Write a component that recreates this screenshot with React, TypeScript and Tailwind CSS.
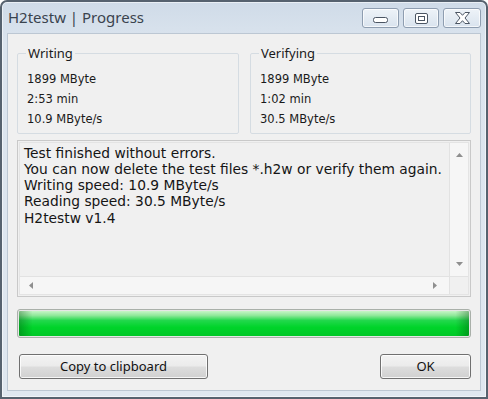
import type { ReactNode } from "react";

const groupFont = "font-['DejaVu_Sans',sans-serif] text-[11.5px] text-[#1a1a1a]";
const uiFont = "font-['Noto_Sans',sans-serif]";

function CaptionButton({ w, children }: { w: string; children: ReactNode }) {
	return (
		<div
			className={`${w} h-[20px] flex items-center justify-center rounded-[3px] border border-[#8e9db0] bg-[linear-gradient(to_bottom,#eef3f8,#d9e3ee)] shadow-[inset_0_0_0_1px_rgba(255,255,255,0.7)]`}
		>
			{children}
		</div>
	);
}

function Group({ title, lines, w }: { title: string; lines: string[]; w: string }) {
	return (
		<fieldset className={`${w} border border-[#d5dce2] rounded-[2px] pl-[9px] pb-[4px]`}>
			<legend className={`${uiFont} ml-[-1px] px-[2px] text-[13px] leading-[15px] text-[#1a1a1a]`}>
				{title}
			</legend>
			<div className={`${groupFont} pt-[8px]`}>
				{lines.map((l) => (
					<div key={l} className="h-[20px] leading-[20px]">
						{l}
					</div>
				))}
			</div>
		</fieldset>
	);
}

function Arrow({ dir }: { dir: "up" | "down" | "left" | "right" }) {
	const pts = {
		up: "0,4 3.5,0 7,4",
		down: "0,0 3.5,4 7,0",
		left: "4,0 0,3.5 4,7",
		right: "0,0 4,3.5 0,7",
	}[dir];
	const vert = dir === "up" || dir === "down";
	return (
		<svg width={vert ? 7 : 4} height={vert ? 4 : 7} viewBox={vert ? "0 0 7 4" : "0 0 4 7"}>
			<polygon points={pts} fill="#8f8f8f" />
		</svg>
	);
}

function WinButton({ label, w }: { label: string; w: string }) {
	return (
		<button
			className={`${w} h-[25px] rounded-[3px] border border-[#707070] bg-[linear-gradient(to_bottom,#f3f3f3_0%,#ebebeb_48%,#dddddd_52%,#d0d0d0_100%)] shadow-[inset_0_0_0_1px_rgba(255,255,255,0.8)] ${uiFont} text-[13px] text-[#111] pt-[1px]`}
		>
			{label}
		</button>
	);
}

export default function App() {
	const log = [
		"Test finished without errors.",
		"You can now delete the test files *.h2w or verify them again.",
		"Writing speed: 10.9 MByte/s",
		"Reading speed: 30.5 MByte/s",
		"H2testw v1.4",
	];

	return (
		<div className="w-[488px] h-[399px] flex flex-col rounded-t-[7px] border-2 border-[#56626f] bg-[linear-gradient(to_bottom,#cfdbe8,#dbe4ee_40px,#dfe7f0)] shadow-[inset_0_0_0_1px_rgba(255,255,255,0.55)]">
			{/* title bar */}
			<div className="h-[31px] flex items-center justify-between pl-[6px] pr-[5px]">
				<span className={`${uiFont} text-[15px] text-[#3a434e]`}>H2testw | Progress</span>
				<div className="flex gap-[4px] pt-[1px]">
					<CaptionButton w="w-[37px]">
						<svg width="15" height="7" viewBox="0 0 15 7" className="mt-[5px]">
							<rect x="0.5" y="0.5" width="14" height="5" rx="2" fill="#fff" stroke="#4b5563" />
						</svg>
					</CaptionButton>
					<CaptionButton w="w-[36px]">
						<svg width="13" height="11" viewBox="0 0 13 11">
							<rect x="0.5" y="0.5" width="12" height="10" rx="1.5" fill="#fff" stroke="#4b5563" />
							<rect x="3.5" y="3.5" width="6" height="4" fill="#fff" stroke="#4b5563" />
						</svg>
					</CaptionButton>
					<CaptionButton w="w-[38px]">
						<svg width="15" height="12" viewBox="0 0 15 12">
							<polygon
								points="0.5,0.5 5,0.5 7.5,3.3 10,0.5 14.5,0.5 10,6 14.5,11.5 10,11.5 7.5,8.7 5,11.5 0.5,11.5 5,6"
								fill="#fff"
								stroke="#4b5563"
								strokeLinejoin="round"
							/>
						</svg>
					</CaptionButton>
				</div>
			</div>

			{/* client area */}
			<div className="flex-1 mx-[5px] mb-[6px] border border-[#bcc7d3] bg-[#f0f0f0] pl-[9px] pr-[9px] pt-[12px] flex flex-col">
				<div className="flex gap-[11px]">
					<Group w="w-[222px]" title="Writing" lines={["1899 MByte", "2:53 min", "10.9 MByte/s"]} />
					<Group w="w-[221px]" title="Verifying" lines={["1899 MByte", "1:02 min", "30.5 MByte/s"]} />
				</div>

				{/* log box */}
				<div className="mt-[6px] h-[157px] border border-[#c9c9c9] p-[1px] flex">
					<div className="flex-1 border border-[#e4e4e4] flex flex-col">
						<div className="flex-1 flex">
							<div className="flex-1 pl-[4px] pt-[1.5px] font-['DejaVu_Sans',sans-serif] text-[13.8px] leading-[16.25px] text-[#151515] whitespace-nowrap overflow-hidden">
								{log.map((l) => (
									<div key={l} className="h-[16.25px]">
										{l}
									</div>
								))}
							</div>
							<div className="w-[19px] border-l border-[#e2e2e2] bg-[#f6f6f6] flex flex-col items-center justify-between py-[10px]">
								<Arrow dir="up" />
								<Arrow dir="down" />
							</div>
						</div>
						<div className="h-[18px] flex border-t border-[#e2e2e2]">
							<div className="flex-1 bg-[#f6f6f6] flex items-center justify-between pl-[9px] pr-[12px]">
								<Arrow dir="left" />
								<Arrow dir="right" />
							</div>
							<div className="w-[19px] border-l border-[#e2e2e2] bg-[#f0f0f0]" />
						</div>
					</div>
				</div>

				{/* progress bar */}
				<div className="mt-[12px] h-[29px] rounded-[3px] border border-[#a9b0a9] p-[1px] bg-[#e6e6e6]">
					<div className="h-full rounded-[1px] bg-[linear-gradient(to_right,rgba(0,70,10,0.35),rgba(0,70,10,0)_3%,rgba(0,70,10,0)_97%,rgba(0,70,10,0.35)),linear-gradient(to_bottom,#c8f5c8_0%,#8fe89a_18%,#22d84c_38%,#00d42a_65%,#00c827_100%)]" />
				</div>

				{/* buttons */}
				<div className="mt-[16px] flex justify-between pl-[2px]">
					<WinButton w="w-[189px]" label="Copy to clipboard" />
					<WinButton w="w-[91px]" label="OK" />
				</div>
			</div>
		</div>
	);
}
